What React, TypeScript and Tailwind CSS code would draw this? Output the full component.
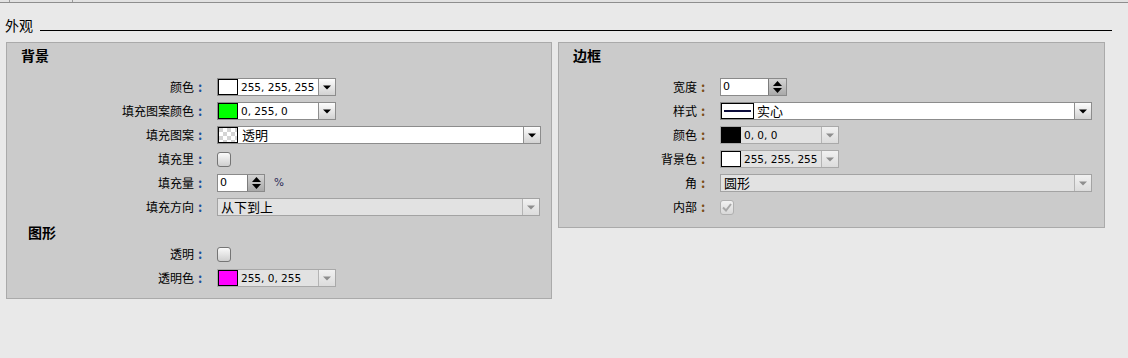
import React from "react";

const NUM = "font-['DejaVu_Sans','Noto_Sans_CJK_SC',sans-serif]";

function Tri({ disabled }: { disabled?: boolean }) {
  return (
    <svg width="8" height="5" viewBox="0 0 8 5">
      <polygon points="0,0.5 8,0.5 4,4.5" fill={disabled ? "#8e8e8e" : "#000"} />
    </svg>
  );
}

function DropBtn({ disabled, w = "w-[17px]" }: { disabled?: boolean; w?: string }) {
  return (
    <div
      className={`${w} h-full shrink-0 flex items-center justify-center border-l ${
        disabled
          ? "border-[#b4b4b4] bg-linear-to-b from-[#f1f1f1] to-[#dcdcdc]"
          : "border-[#8f8f8f] bg-linear-to-b from-[#fdfdfd] to-[#d2d2d2]"
      }`}
    >
      <Tri disabled={disabled} />
    </div>
  );
}

function ColorCombo({ color, value, disabled }: { color: string; value: string; disabled?: boolean }) {
  return (
    <div
      className={`w-[119px] h-[18px] flex border ${
        disabled ? "border-[#a9a9a9] bg-[#e2e2e2]" : "border-[#8c8c8c] bg-white"
      }`}
    >
      <div className="w-[20px] h-full border border-black shrink-0" style={{ backgroundColor: color }} />
      <div className={`flex-1 pl-[3px] text-[10.5px] leading-[16px] text-black ${NUM}`}>{value}</div>
      <DropBtn disabled={disabled} />
    </div>
  );
}

function Checker() {
  return (
    <svg width="18" height="16" className="block">
      <defs>
        <pattern id="chk" width="8" height="8" patternUnits="userSpaceOnUse">
          <rect width="8" height="8" fill="#ffffff" />
          <rect width="4" height="4" fill="#d4d4d4" />
          <rect x="4" y="4" width="4" height="4" fill="#d4d4d4" />
        </pattern>
      </defs>
      <rect width="18" height="16" fill="url(#chk)" />
    </svg>
  );
}

function Spin({ textW, btnW }: { textW: string; btnW: string }) {
  return (
    <div className="h-[18px] flex border border-[#8a8a8a] bg-white">
      <div className={`${textW} h-full pl-[2px] text-[11px] leading-[16px] text-black ${NUM}`}>0</div>
      <div
        className={`${btnW} h-full border-l border-[#7c7c7c] bg-linear-to-b from-[#d4d4d4] to-[#a9a9a9] flex flex-col items-center justify-center gap-[2px]`}
      >
        <svg width="9" height="5" viewBox="0 0 9 5">
          <polygon points="4.5,0 9,5 0,5" fill="#000" />
        </svg>
        <svg width="9" height="5" viewBox="0 0 9 5">
          <polygon points="0,0 9,0 4.5,5" fill="#000" />
        </svg>
      </div>
    </div>
  );
}

function Check({ checked, disabled }: { checked?: boolean; disabled?: boolean }) {
  return (
    <div
      className={`w-[14px] h-[15px] rounded-[3px] border flex items-center justify-center ${
        disabled
          ? "border-[#b0b0b0] bg-linear-to-b from-[#f2f2f2] to-[#d8d8d8]"
          : "border-[#757575] bg-linear-to-b from-[#fafafa] to-[#cfcfcf]"
      }`}
    >
      {checked && (
        <svg width="10" height="9" viewBox="0 0 10 9">
          <path d="M1 4.5 L4 7.5 L9 1" stroke="#a8a8a8" strokeWidth="2" fill="none" />
        </svg>
      )}
    </div>
  );
}

function Row({
  label,
  labelW,
  colon,
  children,
}: {
  label: string;
  labelW: string;
  colon: string;
  children: React.ReactNode;
}) {
  return (
    <div className="h-[18px] flex items-center">
      <div className={`${labelW} shrink-0 flex justify-end items-center text-[12px] leading-[18px] text-black`}>
        <span>{label}</span>
        <span className={`inline-block w-[12px] text-center text-[13px] font-bold ${colon}`}>:</span>
      </div>
      <div className="ml-[11px] flex items-center">{children}</div>
    </div>
  );
}

export default function App() {
  const L = "w-[199px]";
  const R = "w-[150px]";
  const cL = "text-[#1d4f9c]";
  const cR = "text-[#7a4a16]";
  return (
    <div className="w-[1128px] h-[358px] bg-[#e9e9e9] overflow-hidden font-['Noto_Sans_CJK_SC',sans-serif]">
      {/* top strip */}
      <div className="h-[2px] flex bg-[#e2e2e2]">
        <div className="w-[10px] border-r border-[#9a9a9a]" />
        <div className="w-[63px] border-r border-[#9a9a9a]" />
      </div>
      <div className="h-px bg-[#8e8e8e]" />

      {/* title */}
      <div className="mt-[14px] flex items-start pl-[5px] pr-[16px]">
        <span className="text-[14px] leading-[16px] text-black">外观</span>
        <div className="flex-1 ml-[7px] mt-[13px] h-px bg-black" />
      </div>

      {/* panels */}
      <div className="mt-[9px] pl-[6px] flex items-start gap-[6px]">
        {/* left panel */}
        <div className="w-[546px] border border-[#aaaaaa] bg-[#cbcbcb] pb-[11px]">
          <div className="pl-[14px] h-[24px] text-[14px] leading-[24px] font-bold text-black">背景</div>
          <div className="mt-[11px] flex flex-col gap-[6px]">
            <Row label="颜色" labelW={L} colon={cL}>
              <ColorCombo color="#ffffff" value="255, 255, 255" />
            </Row>
            <Row label="填充图案颜色" labelW={L} colon={cL}>
              <ColorCombo color="#00ff00" value="0, 255, 0" />
            </Row>
            <Row label="填充图案" labelW={L} colon={cL}>
              <div className="w-[324px] h-[18px] flex border border-[#8c8c8c] bg-white">
                <div className="w-[20px] h-full border border-black shrink-0 overflow-hidden">
                  <Checker />
                </div>
                <div className="flex-1 pl-[4px] text-[13px] leading-[16px] text-black">透明</div>
                <DropBtn />
              </div>
            </Row>
            <Row label="填充里" labelW={L} colon={cL}>
              <Check />
            </Row>
            <Row label="填充量" labelW={L} colon={cL}>
              <Spin textW="w-[29px]" btnW="w-[17px]" />
              <span className={`ml-[9px] text-[10.5px] text-[#2a2a55] ${NUM}`}>%</span>
            </Row>
            <Row label="填充方向" labelW={L} colon={cL}>
              <div className="w-[323px] h-[18px] flex border border-[#a3a3a3] bg-[#e2e2e2]">
                <div className="flex-1 pl-[3px] text-[13px] leading-[16px] text-black">从下到上</div>
                <DropBtn disabled />
              </div>
            </Row>
          </div>
          <div className="mt-[4px] pl-[21px] h-[24px] text-[14px] leading-[24px] font-bold text-black">图形</div>
          <div className="mt-px flex flex-col gap-[6px]">
            <Row label="透明" labelW={L} colon={cL}>
              <Check />
            </Row>
            <Row label="透明色" labelW={L} colon={cL}>
              <ColorCombo color="#ff00ff" value="255, 0, 255" disabled />
            </Row>
          </div>
        </div>

        {/* right panel */}
        <div className="w-[547px] border border-[#aaaaaa] bg-[#cbcbcb] pb-[11px]">
          <div className="pl-[14px] h-[24px] text-[14px] leading-[24px] font-bold text-black">边框</div>
          <div className="mt-[11px] flex flex-col gap-[6px]">
            <Row label="宽度" labelW={R} colon={cR}>
              <Spin textW="w-[47px]" btnW="w-[18px]" />
            </Row>
            <Row label="样式" labelW={R} colon={cR}>
              <div className="w-[372px] h-[18px] flex border border-[#8c8c8c] bg-white">
                <div className="w-[33px] h-full border border-black shrink-0 flex items-center justify-center">
                  <div className="w-[27px] h-[2px] bg-[#0c0c3c]" />
                </div>
                <div className="flex-1 pl-[3px] text-[13px] leading-[16px] text-black">实心</div>
                <DropBtn />
              </div>
            </Row>
            <Row label="颜色" labelW={R} colon={cR}>
              <ColorCombo color="#000000" value="0, 0, 0" disabled />
            </Row>
            <Row label="背景色" labelW={R} colon={cR}>
              <ColorCombo color="#ffffff" value="255, 255, 255" disabled />
            </Row>
            <Row label="角" labelW={R} colon={cR}>
              <div className="w-[372px] h-[18px] flex border border-[#a3a3a3] bg-[#e2e2e2]">
                <div className="flex-1 pl-[3px] text-[13px] leading-[16px] text-black">圆形</div>
                <DropBtn disabled />
              </div>
            </Row>
            <Row label="内部" labelW={R} colon={cR}>
              <Check checked disabled />
            </Row>
          </div>
        </div>
      </div>
    </div>
  );
}
